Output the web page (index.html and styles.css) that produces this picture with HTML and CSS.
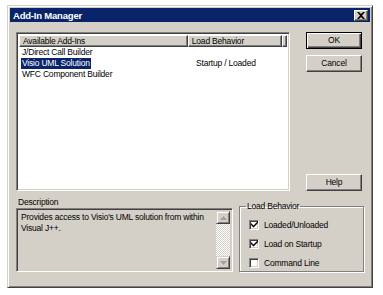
FILE: index.html
```html
<!DOCTYPE html>
<html>
<head>
<meta charset="utf-8">
<link rel="stylesheet" href="styles.css">
</head>
<body>
<div class="window">
  <div class="titlebar">
    <span class="title">Add-In Manager</span>
    <span class="close"><svg width="8" height="7" viewBox="0 0 8 7"><path d="M0 0h2l2 2 2-2h2L5 3.5 8 7H6L4 5 2 7H0l3-3.5z" fill="#000"/></svg></span>
  </div>
  <div class="body">
    <div class="top">
      <div class="list sunken">
        <div class="header">
          <div class="hcell c1">Available Add-Ins</div>
          <div class="hcell c2">Load Behavior</div>
          <div class="hfill"></div>
        </div>
        <div class="row"><div class="cell c1"><span>J/Direct Call Builder</span></div><div class="cell c2"></div></div>
        <div class="row"><div class="cell c1"><span class="sel">Visio UML Solution</span></div><div class="cell c2">Startup / Loaded</div></div>
        <div class="row"><div class="cell c1"><span>WFC Component Builder</span></div><div class="cell c2"></div></div>
      </div>
      <div class="buttons">
        <div class="btn default">OK</div>
        <div class="btn">Cancel</div>
        <div class="spacer"></div>
        <div class="btn">Help</div>
      </div>
    </div>
    <div class="bottom">
      <div class="desc">
        <div class="label">Description</div>
        <div class="descbox sunken">
          <div class="desctext">Provides access to Visio's UML solution from within Visual J++.</div>
          <div class="scroll">
            <div class="sbtn"><svg width="7" height="4" viewBox="0 0 7 4"><path d="M3.5 0L7 4H0z" fill="#a0a0a0"/></svg></div>
            <div class="track"></div>
            <div class="sbtn"><svg width="7" height="4" viewBox="0 0 7 4"><path d="M0 0h7L3.5 4z" fill="#a0a0a0"/></svg></div>
          </div>
        </div>
      </div>
      <fieldset class="group">
        <legend>Load Behavior</legend>
        <label class="chk"><span class="box"><svg width="7" height="7" viewBox="0 0 7 7"><path d="M0 2l2.5 2.5L7 0v2L2.5 6.5 0 4z" fill="#000"/></svg></span>Loaded/Unloaded</label>
        <label class="chk"><span class="box"><svg width="7" height="7" viewBox="0 0 7 7"><path d="M0 2l2.5 2.5L7 0v2L2.5 6.5 0 4z" fill="#000"/></svg></span>Load on Startup</label>
        <label class="chk"><span class="box"></span>Command Line</label>
      </fieldset>
    </div>
  </div>
</div>
</body>
</html>
```
FILE: styles.css
```css
html, body {
  margin: 0;
  background: #fff;
}
body {
  padding: 5px 0 0 7px;
  font-family: "Liberation Sans", Arial, sans-serif;
  font-size: 8.5px;
  letter-spacing: -0.2px;
  color: #000;
}
.window {
  box-sizing: border-box;
  width: 366px;
  height: 283px;
  background: #d4d0c8;
  border: 1px solid;
  border-color: #d4d0c8 #404040 #404040 #d4d0c8;
  box-shadow: inset 1px 1px #fff, inset -1px -1px #808080;
  padding: 2px;
  display: flex;
  flex-direction: column;
}
.titlebar {
  height: 14px;
  background: #0a246a;
  display: flex;
  align-items: center;
  justify-content: space-between;
  padding: 0 2px 0 3px;
}
.title {
  color: #fff;
  font-weight: bold;
  font-size: 9.5px;
}
.close {
  box-sizing: border-box;
  width: 14px;
  height: 11px;
  background: #d4d0c8;
  border: 1px solid;
  border-color: #fff #404040 #404040 #fff;
  box-shadow: inset -1px -1px #808080;
  display: flex;
  align-items: center;
  justify-content: center;
}
.body {
  padding: 10px 6px 0 6px;
  display: flex;
  flex-direction: column;
}
.top {
  display: flex;
  gap: 16px;
}
.sunken {
  box-sizing: border-box;
  border: 1px solid;
  border-color: #808080 #fff #fff #808080;
  box-shadow: inset 1px 1px #404040, inset -1px -1px #d4d0c8;
}
.list {
  width: 274px;
  height: 159px;
  background: #fff;
  padding: 2px;
}
.header {
  display: flex;
  height: 12px;
}
.hcell, .hfill {
  box-sizing: border-box;
  background: #d4d0c8;
  border: 1px solid;
  border-color: #fff #404040 #404040 #fff;
  box-shadow: inset -1px -1px #808080;
  line-height: 10px;
  padding-left: 3px;
  white-space: nowrap;
  overflow: hidden;
}
.hfill { flex: 1; }
.c1 { width: 174px; }
.c2 { width: 97px; }
.row {
  display: flex;
  height: 11px;
  line-height: 11px;
}
.cell {
  padding-left: 2px;
  white-space: nowrap;
  box-sizing: border-box;
}
.cell.c2 { padding-left: 5px; }
.sel {
  background: #0a246a;
  color: #fff;
  padding: 0 1px;
  display: inline-block;
}
.cell span:not(.sel) { padding: 0 1px; }
.buttons {
  width: 56px;
  display: flex;
  flex-direction: column;
  gap: 6px;
}
.spacer { flex: 1; }
.btn {
  box-sizing: border-box;
  height: 17px;
  background: #d4d0c8;
  border: 1px solid;
  border-color: #fff #404040 #404040 #fff;
  box-shadow: inset -1px -1px #808080;
  text-align: center;
  line-height: 15px;
}
.btn.default {
  border-color: #000;
  box-shadow: inset 1px 1px #fff, inset -1px -1px #404040, inset -2px -2px #808080;
}
.bottom {
  display: flex;
  gap: 6px;
  margin-top: 6px;
}
.desc {
  width: 217px;
}
.label {
  padding-left: 2px;
  height: 11px;
  line-height: 11px;
}
.descbox {
  height: 64px;
  display: flex;
  padding: 2px;
}
.desctext {
  flex: 1;
  padding: 1px 2px;
  line-height: 11px;
}
.scroll {
  width: 14px;
  display: flex;
  flex-direction: column;
}
.sbtn {
  box-sizing: border-box;
  height: 13px;
  background: #d4d0c8;
  border: 1px solid;
  border-color: #d4d0c8 #404040 #404040 #d4d0c8;
  box-shadow: inset 1px 1px #fff, inset -1px -1px #808080;
  display: flex;
  align-items: center;
  justify-content: center;
}
.track {
  flex: 1;
  background: repeating-conic-gradient(#fff 0 25%, #d4d0c8 0 50%) 0 0 / 2px 2px;
}
.group {
  box-sizing: border-box;
  margin: 4px 0 0 0;
  padding: 7px 8px 0 9px;
  width: 125px;
  height: 71px;
  border: 1px solid #808080;
  box-shadow: 1px 1px #fff, inset 1px 1px #fff;
  display: flex;
  flex-direction: column;
  gap: 8px;
}
.group legend {
  padding: 0 1px;
  margin-left: -3px;
  line-height: 11px;
}
.chk {
  display: flex;
  align-items: center;
  gap: 5px;
  height: 11px;
}
.box {
  box-sizing: border-box;
  width: 10px;
  height: 10px;
  background: #fff;
  border: 1px solid;
  border-color: #808080 #fff #fff #808080;
  box-shadow: inset 1px 1px #404040, inset -1px -1px #d4d0c8;
  display: flex;
  align-items: center;
  justify-content: center;
}
```
